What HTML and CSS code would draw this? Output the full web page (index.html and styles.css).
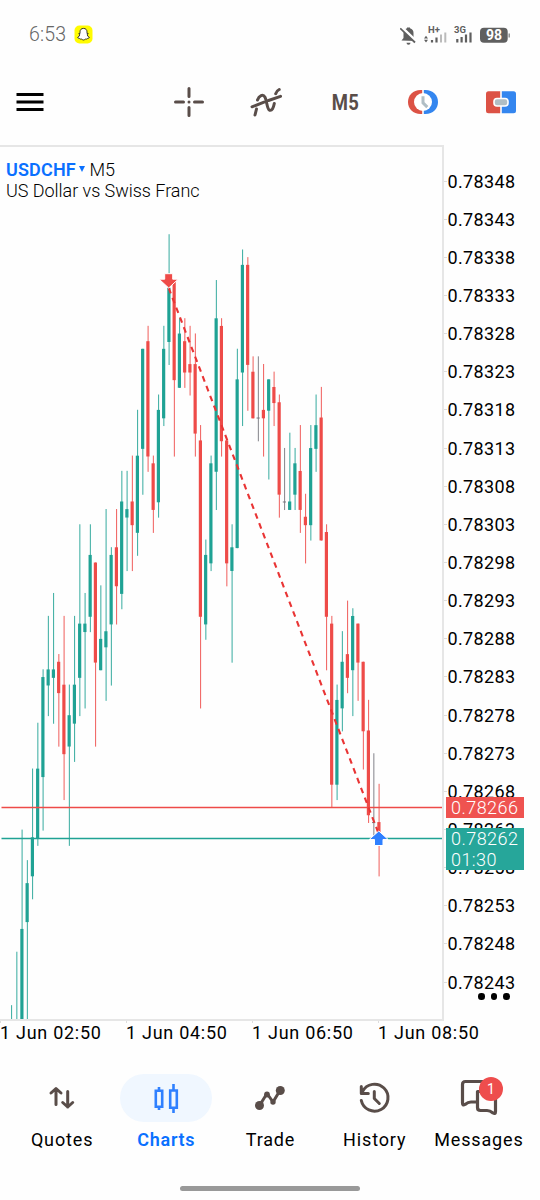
FILE: index.html
```html
<!DOCTYPE html><html lang="en"><head><meta charset="utf-8"/>
<meta name="viewport" content="width=device-width, initial-scale=1.0">
<title>USDCHF M5</title>
<link rel="stylesheet" href="styles.css">
</head>
<body>

<header class="status">
	<span class="time">6:53</span>
	<svg class="snap" width="19" height="19" viewBox="0 0 19 19"><rect x=".5" y=".5" width="18" height="18" rx="5" fill="#fffb00"/><path d="M9.5 3.4c2.3 0 3.5 1.5 3.5 3.5v1.7l1.3.1-1.1 1.1c.3 1.3 1 2.1 2.2 2.6-.3.9-1.3.8-1.9 1.1-.3.8-1.3.5-2.1.6-.6.4-1.2.9-1.9.9s-1.3-.5-1.9-.9c-.8-.1-1.8.2-2.1-.6-.6-.3-1.6-.2-1.9-1.1 1.2-.5 1.9-1.3 2.2-2.6l-1.1-1.1 1.3-.1V6.9c0-2 1.2-3.500 3.500-3.500z" fill="#fff" stroke="#222" stroke-width=".9"/></svg>
	<svg class="icons" width="112" height="22" viewBox="0 0 112 22">
		<path d="M6.500 18.700h4a2 2 0 0 1-4 0zM1.500 16.500l2-2.500V9q0-3.500 3.500-4.700V3.500h3v.8Q13.500 5.500 13.500 9v5l2 3z" fill="#5f5f5f"/>
		<path d="M1 3L16 17.500" stroke="#fff" stroke-width="3.400"/><path d="M.2 4.300L15 18.500" stroke="#5f5f5f" stroke-width="1.800"/>
		<text x="28" y="9" class="net">H+</text>
		<path d="M24 14.500l2-2.800 2 2.800zM24 15.800l2 2.800 2-2.800z" fill="#5f5f5f"/>
		<path d="M32 16v2.500M36.500 13.500v5" stroke="#5f5f5f" stroke-width="2.200"/><path d="M41 10.500v8M45.300 8.500v10" stroke="#bbb" stroke-width="2"/>
		<text x="54" y="9" class="net">3G</text>
		<path d="M57.300 15v3.500M61.600 13v5.500M66 10.500v8M70.500 8.500v10" stroke="#5f5f5f" stroke-width="2.200"/>
		<rect x="80" y="3.700" width="27.700" height="15" rx="4" fill="#5f5f5f"/><path d="M109.200 9.500v4" stroke="#888" stroke-width="1.400"/>
		<text x="94" y="16" class="batt">98</text>
	</svg>
</header>

<div class="toolbar">
	<svg class="menu" width="28" height="18" viewBox="0 0 28 18"><path d="M.5 1.500h27M.5 9h27M.5 16.500h27" stroke="#000" stroke-width="3"/></svg>
	<div class="tools">
		<svg width="36" height="36" viewBox="0 0 36 36" class="line"><path d="M4.500 18h8M23.500 18h8M18 4.500v8M18 23.500v8" stroke-width="3"/><circle cx="18" cy="18" r="1.500" fill="#594d49" stroke="none"/></svg>
		<svg width="36" height="36" viewBox="0 0 36 36" class="line"><path d="M3 22.800L15 18.200M6 31l1.500-6M8.500 16C10 11.500 14 9.500 16 13.200C18 17.500 18 25 20.500 26.200C23 27 24.300 24.500 25.300 19.500M19.500 16.500L31.500 12.300M26.700 9.700Q27.700 6.700 30.200 5.500" stroke-width="3"/></svg>
		<span class="tf">M5</span>
		<svg width="36" height="36" viewBox="0 0 36 36"><path d="M17.200 6H15.500C8 6 3 11.400 3 18s5 12 12.500 12h1.700z" fill="#dc5245"/><path d="M18.800 6h1.700C28 6 33 11.400 33 18s-5 12-12.500 12h-1.700z" fill="#3486ef"/><circle cx="18" cy="18" r="9" fill="#fff"/><path d="M18 12.300v6.500l4.300 4.300" fill="none" stroke="#b0bec5" stroke-width="3"/></svg>
		<svg width="36" height="36" viewBox="0 0 36 36"><path d="M17.200 7.300H5.500Q3 7.300 3 9.800v16.900q0 2.500 2.500 2.500h11.700z" fill="#dc5245"/><path d="M18.800 7.300h11.700q2.500 0 2.500 2.500v16.900q0 2.500-2.500 2.500H18.800z" fill="#3486ef"/><rect x="11" y="14.500" width="14" height="7.500" rx="3" fill="#b0bec5" stroke="#fff" stroke-width="1.600"/></svg>
	</div>
</div>

<main class="chart">
	<div class="plot">
		<div class="title">
			<div><b>USDCHF</b> <i class="caret"></i> M5</div>
			<div>US Dollar vs Swiss Franc</div>
		</div>
		<svg id="candles" width="442" height="874" viewBox="0 147 442 874"></svg>
	</div>
	<div class="prices">
		<div id="scale"></div>
		<div class="tag ask">0.78266</div>
		<div class="tag bid">0.78262<br>01:30</div>
		<div class="more"><i></i><i></i><i></i></div>
	</div>
</main>
<div class="times"><span>1 Jun 02:50</span><span>1 Jun 04:50</span><span>1 Jun 06:50</span><span>1 Jun 08:50</span></div>

<nav class="tabs">
	<a><span class="pill"><svg width="36" height="36" viewBox="0 0 36 36" class="line"><path d="M12 24.500V9M7 13l5-4.500L17 13M23.700 11.500V27M18.700 22.500l5 4.500 5-4.500" stroke-width="3"/></svg></span>Quotes</a>
	<a class="on"><span class="pill"><svg width="36" height="36" viewBox="0 0 36 36" fill="none" stroke="#2f80ff" stroke-width="2.600"><path d="M7.800 10.800h6.400v16H7.800zM11 7v3.800M11 26.800V30M22.200 10.500h6.600v17.300h-6.600zM25.500 4v6.500M25.500 27.800V33"/></svg></span>Charts</a>
	<a><span class="pill"><svg width="36" height="36" viewBox="0 0 36 36" class="line"><path d="M7.500 25.500L15 13.500l6 8.500 7-11.500" stroke-width="3"/><g fill="#594d49" stroke="none"><circle cx="7.500" cy="25.500" r="4.500"/><circle cx="28.300" cy="10.500" r="4.500"/><circle cx="15" cy="14.500" r="2.900"/><circle cx="21" cy="22" r="2.700"/></g></svg></span>Trade</a>
	<a><span class="pill"><svg width="36" height="36" viewBox="0 0 36 36" class="line"><path d="M4.300 20.500A13.500 13.500 0 1 0 5.500 11.500M4.300 6.500v7h7M17.300 11.500v7l5 5" stroke-width="3"/></svg></span>History</a>
	<a><span class="pill"><svg width="40" height="40" viewBox="0 0 40 40" class="line"><path d="M33 17V6.500Q33 3.500 30 3.500H6.500q-3 0-3 3V25q0 3 2.500 1.500Q9 24 12 24h5M18.500 13.500H33.500q3 0 3 3V33.500q0 3-2.500 1.500Q31 32.500 28 32.500H21.500q-3 0-3-3z" stroke-width="3.200"/></svg><em>1</em></span>Messages</a>
</nav>
<div class="home"></div>

<script src="chart.js"></script>
</body>
</html>
```
FILE: styles.css
```css
body {
	margin: 0;
	width: 540px;
	height: 1200px;
	overflow: hidden;
	background-color: #fefefe;
	color: #000;
	font-family: Roboto, sans-serif;
	font-size: 18px;
}
svg {
	display: block;
	flex: none;
}
.line {
	fill: none;
	stroke: #594d49;
	stroke-width: 2.5;
	stroke-linecap: round;
	stroke-linejoin: round;
}
/* status bar */
.status {
	display: flex;
	align-items: center;
	height: 69px;
	margin-bottom: -1px;
	padding: 0 28px 0 29px;
	color: #666;
}
.time {
	width: 45px;
	font-size: 19.5px;
	letter-spacing: .2px;
	font-weight: 350;
}
.icons {
	margin-left: auto;
	fill: #5f5f5f;
	font-weight: bold;
}
.net {
	font-size: 9.5px;
}
.batt {
	fill: #fff;
	font-size: 14px;
	text-anchor: middle;
}
/* toolbar */
.toolbar {
	display: flex;
	align-items: center;
	height: 68px;
	padding: 0 0 9px 16px;
}
.tools {
	display: grid;
	grid-template-columns: repeat(5, 78px);
	place-items: center;
	margin-left: 106px;
}
.tf {
	color: #594d49;
	font-size: 22px;
	font-weight: 700;
	letter-spacing: .5px;
	transform: scaleX(.84);
}
/* chart */
.chart {
	display: flex;
	height: 876px;
}
.plot {
	position: relative;
	box-sizing: border-box;
	width: 444px;
	border: 2px solid #e6e6e6;
	border-left: 0;
	overflow: hidden;
}
.title {
	position: absolute;
	left: 6px;
	top: 11.5px;
	line-height: 21.5px;
	letter-spacing: -.04px;
	font-weight: 300;
}
.title b {
	color: #0a70ff;
	font-weight: 600;
	letter-spacing: .15px;
}
.caret {
	display: inline-block;
	border: 3.5px solid transparent;
	border-top: 6px solid #0a70ff;
	border-bottom: 0;
	margin: 0 0 4px -1px;
}
.prices {
	position: relative;
	width: 96px;
	padding-top: 17px;
}
.price {
	display: flex;
	align-items: center;
	height: 38.15px;
	letter-spacing: .35px;
}
.price::before {
	content: "";
	width: 3px;
	height: 1px;
	margin-right: .5px;
	background-color: #ddd;
}
.tag {
	position: absolute;
	left: 2px;
	width: 73px;
	padding-left: 5px;
	color: #fff;
	font-weight: 300;
	letter-spacing: .45px;
	line-height: 21px;
}
.ask {
	top: 652px;
	background-color: #ef5350;
}
.bid {
	top: 683px;
	background-color: #26a69a;
}
.more {
	position: absolute;
	left: 34px;
	top: 848px;
	display: flex;
	gap: 6px;
}
.more i {
	width: 6.5px;
	height: 6.5px;
	border-radius: 50%;
	background-color: #000;
}
.times {
	display: grid;
	grid-template-columns: repeat(4, 126px);
	height: 38px;
	letter-spacing: .72px;
	line-height: 24px;
	white-space: nowrap;
}
.times span::before {
	content: "";
	display: block;
	width: 1px;
	height: 2px;
	margin-bottom: -2px;
	background-color: #ddd;
}
/* tabs */
.tabs {
	display: grid;
	grid-template-columns: repeat(5, 1fr);
	height: 112px;
	padding: 15px 9px 0 10px;
	box-sizing: border-box;
}
.tabs a {
	display: flex;
	flex-direction: column;
	align-items: center;
	letter-spacing: .85px;
	line-height: 36px;
}
.tabs .on {
	color: #0a70ff;
	font-weight: 600;
	letter-spacing: .7px;
}
.pill {
	position: relative;
	display: flex;
	align-items: center;
	justify-content: center;
	width: 92px;
	height: 48px;
	border-radius: 24px;
}
.on .pill {
	background-color: #f0f7ff;
}
.pill em {
	position: absolute;
	left: 46px;
	top: 3px;
	width: 24px;
	height: 24px;
	border-radius: 50%;
	background-color: #ee4d4d;
	color: #fff;
	font-size: 14px;
	font-style: normal;
	line-height: 24px;
	letter-spacing: 0;
	text-align: center;
}
.home {
	width: 180px;
	height: 5px;
	margin: 15px auto 0;
	border-radius: 3px;
	background-color: #999;
}
```
FILE: chart.js
```js
// open, high, low, close (last three digits of the price)
const data = [
	[230,240,230,230],[230,247,230,230],[230,263,230,250],[251,259,230,256],[257,271,254,262],
	[262,277,261,271],[270,284,263,283],[282,291,278,284],[283,294,277,284],[285,286,274,281],
	[282,291,267,273],[274,282,261,278],[277,291,272,282],[283,303,278,290],[289,294,279,290],
	[291,303,289,299],[298,298,274,285],[284,295,284,288],[287,305,280,289],[290,300,282,299],
	[300,305,290,295],[294,310,292,306],[304,310,297,305],[306,312,297,303],[302,318,299,312],
	[313,326,307,326],[327,329,310,312],[311,312,302,305],[306,320,304,318],[317,329,316,326],
	[327,341,324,334],[335,335,312,322],[321,330,321,328],[327,330,321,323],[324,329,320,323],
	[324,328,312,315],[314,316,279,291],[290,301,288,299],[298,312,297,311],[310,335,305,330],
	[329,330,312,314],[314,314,295,298],[297,303,285,300],[300,326,300,322],[323,339,316,337],
	[337,338,318,324],[323,325,317,317],[317,325,314,317],[318,324,312,317],[318,322,309,322],
	[321,323,316,319],[319,320,304,307],[306,313,305,306],[305,315,305,306],[307,313,305,311],
	[310,316,302,305],[304,307,298,303],[303,316,301,313],[313,320,310,316],[317,321,301,301],
	[302,303,284,291],[290,291,266,269],[269,282,267,280],[279,289,276,285],[286,293,281,283],
	[284,292,278,291],[290,290,280,285],[285,285,271,276],[276,280,264,265],[264,273,262,264],
	[264,269,257,262],
];
const py = p => 181.3 + (348 - p) * 7.633;
const px = i => 11.6 + i * 5.25;

let s = "";
data.forEach(([o, h, l, c], i) => {
	const col = c > o ? "#1fa294" : (c < o ? "#ee4b48" : "#75757d");
	// the first two bars open below the visible range
	const wick = i < 2 ? "#1fa294" : col;
	const x = px(i);
	s += `<path d="M${x} ${py(h) - .5}V${py(l) + .5}" stroke="${wick}" stroke-width=".9"/>`;
	const top = py(Math.max(o, c));
	const height = Math.max(1, Math.abs(o - c) * 7.633 + .8);
	s += `<rect x="${x - 1.8}" y="${top - .4}" width="3.2" height="${height}" fill="${col}"/>`;
});
s += `<path d="M1.5 807.6H442" stroke="#ee4b48" stroke-width="1.5"/>`;
s += `<path d="M1.5 838.4H442" stroke="#1fa294" stroke-width="1.5"/>`;
s += `<path d="M168.700 288L378 832" stroke="#e93434" stroke-width="2.1" stroke-dasharray="5.700 4.800"/>`;
s += `<path d="M164.700 273.700h8v5.500h5.500L168.700 288l-9.500-8.800h5.500z" fill="#ee4b48" stroke="#fff"/>`;
s += `<path d="M374.500 845.500v-6h-5.300L378.800 831l9.400 8.500h-5.200v6z" fill="#2f80ff" stroke="#fff"/>`;
document.getElementById("candles").innerHTML = s;

const scale = document.getElementById("scale");
for (let p = 348; p >= 243; p -= 5) {
	const div = document.createElement("div");
	div.className = "price";
	div.textContent = "0.78" + p;
	scale.appendChild(div);
}
```
